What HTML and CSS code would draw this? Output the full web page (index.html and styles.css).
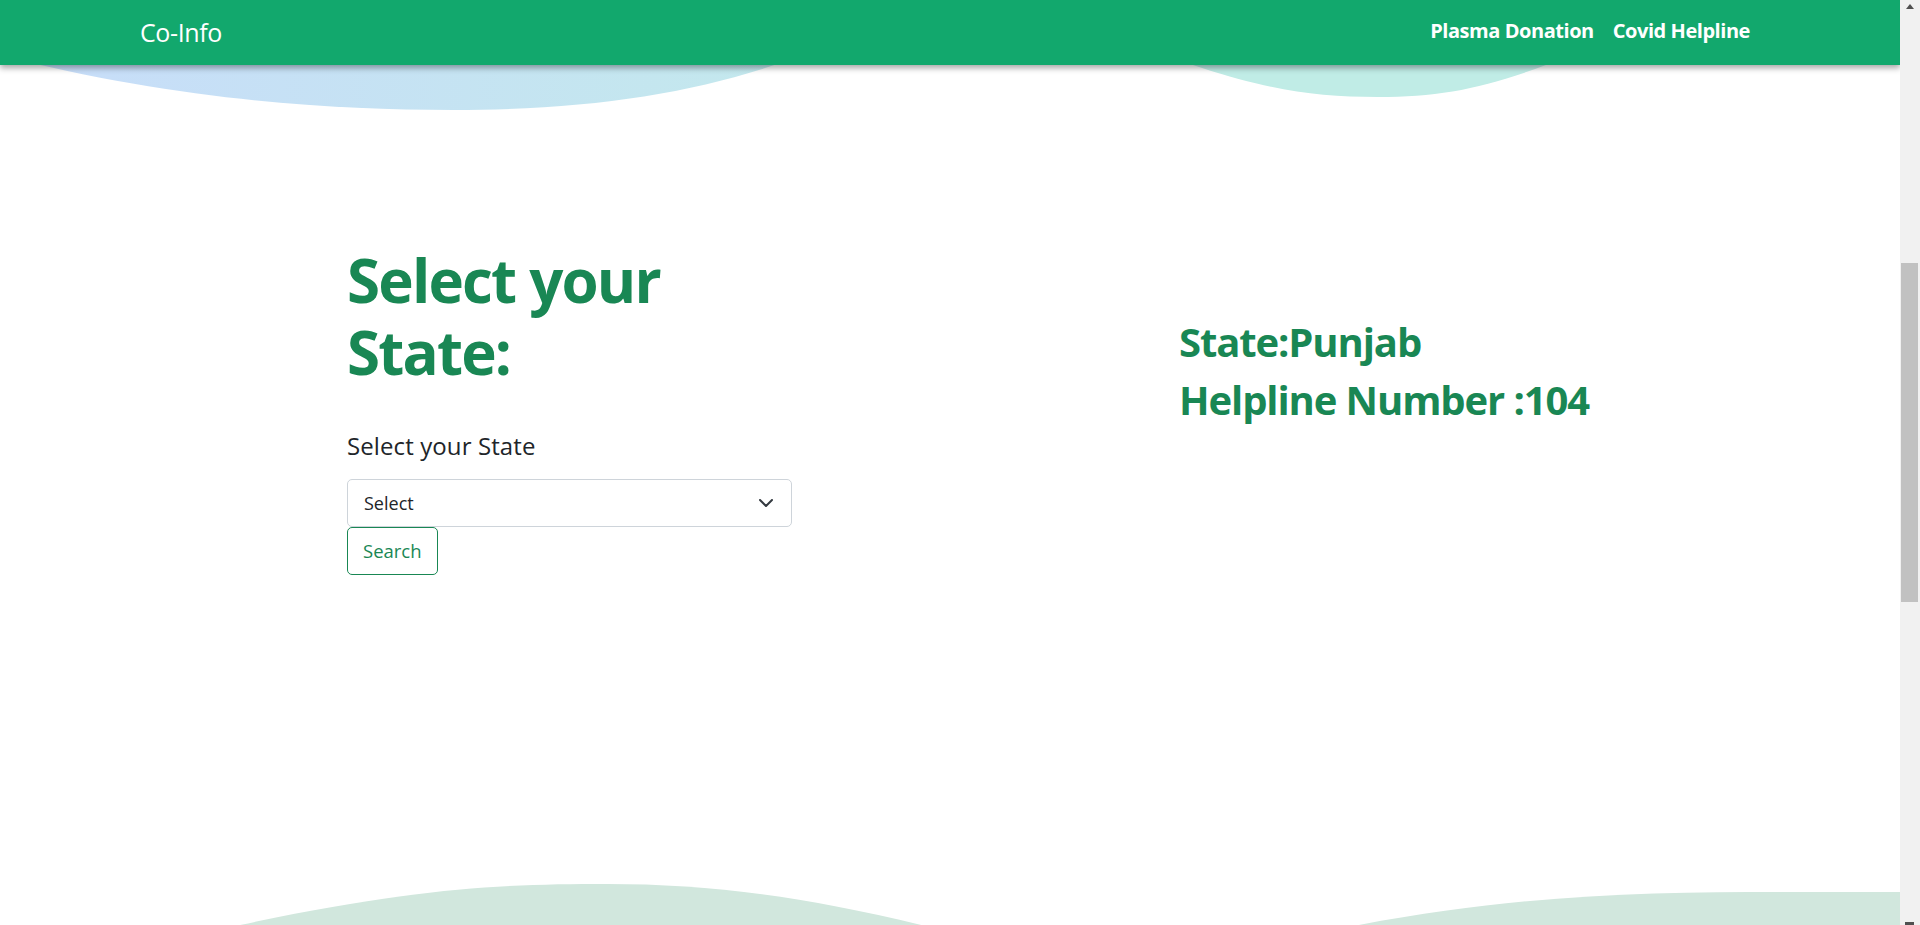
FILE: index.html
```html
<!DOCTYPE html>
<html lang="en">
<head>
<meta charset="utf-8">
<title>Co-Info</title>
<link rel="stylesheet" href="styles.css">
</head>
<body>
<div class="screen">
  <div class="viewport">
    <svg class="waves-top" width="1900" height="130" viewBox="0 0 1900 130" aria-hidden="true">
      <defs>
        <linearGradient id="g1" x1="0" y1="0" x2="1" y2="0">
          <stop offset="0" stop-color="#c8dbfb"/>
          <stop offset="1" stop-color="#c3e9ec"/>
        </linearGradient>
      </defs>
      <path d="M-90,30 C120,95 300,110 453,110 C610,110 730,88 840,40 L840,0 L-90,0 Z" fill="url(#g1)"/>
      <path d="M1110,35 C1240,85 1295,97 1378,97 C1460,97 1510,82 1620,35 L1620,0 L1110,0 Z" fill="#c0ece6"/>
    </svg>
    <nav class="navbar">
      <a class="brand" href="#">Co-Info</a>
      <div class="nav-links">
        <a class="nav-link" href="#">Plasma Donation</a>
        <a class="nav-link" href="#">Covid Helpline</a>
      </div>
    </nav>
    <main class="content">
      <section class="picker">
        <h1 class="title">Select your State:</h1>
        <label class="label">Select your State</label>
        <div class="select">
          <span>Select</span>
          <svg class="chevron" width="14" height="8" viewBox="0 0 14 8" aria-hidden="true"><path d="M1 1l6 6 6-6" fill="none" stroke="#343a40" stroke-width="2" stroke-linecap="round" stroke-linejoin="round"/></svg>
        </div>
        <button class="btn">Search</button>
      </section>
      <section class="result">
        <h2 class="info">State:Punjab</h2>
        <h2 class="info">Helpline Number :104</h2>
      </section>
    </main>
    <svg class="waves-bottom" width="1900" height="60" viewBox="0 865 1900 60" aria-hidden="true">
      <path d="M72,965 C372,888 482,884 607,884 C742,884 862,905 1072,965 Z" fill="#d1e7dd"/>
      <path d="M1190,965 C1440,895 1610,892 1790,892 L1900,892 L1900,965 Z" fill="#d1e7dd"/>
    </svg>
  </div>
  <div class="scrollbar">
    <div class="sb-btn"><span class="arrow-up"></span></div>
    <div class="sb-track"><div class="sb-thumb"></div></div>
    <div class="sb-btn-down"><span class="arrow-down"></span></div>
  </div>
</div>
</body>
</html>
```

FILE: styles.css
```css
* { box-sizing: border-box; }
html, body {
  margin: 0;
  padding: 0;
  height: 925px;
  overflow: hidden;
  background: #fff;
  font-family: "Open Sans", "Noto Sans", sans-serif;
  color: #212529;
}
.screen {
  display: flex;
  width: 1920px;
  height: 925px;
}
.viewport {
  position: relative;
  width: 1900px;
  height: 925px;
  overflow: hidden;
  display: flex;
  flex-direction: column;
}
.waves-top {
  position: absolute;
  top: 0;
  left: 0;
  z-index: 0;
}
.waves-bottom {
  position: absolute;
  left: 0;
  bottom: 0;
  z-index: 0;
}
.navbar {
  position: relative;
  z-index: 3;
  height: 65px;
  flex: 0 0 65px;
  background: #12a86d;
  display: flex;
  align-items: center;
  justify-content: space-between;
  padding: 0 150px 0 140px;
  box-shadow: 0 3px 6px rgba(0, 0, 0, 0.35);
}
.brand {
  color: #fff;
  text-decoration: none;
  font-size: 25px;
  line-height: 1.5;
  font-weight: 400;
  letter-spacing: -0.4px;
}
.nav-links {
  display: flex;
  gap: 19px;
  margin-bottom: 4px;
}
.nav-link {
  color: #fff;
  text-decoration: none;
  font-size: 20px;
  font-weight: 700;
  line-height: 30px;
  letter-spacing: -0.45px;
}
.content {
  position: relative;
  z-index: 1;
  display: flex;
  gap: 387px;
  padding: 179px 0 0 347px;
}
.picker {
  width: 445px;
  display: flex;
  flex-direction: column;
  align-items: flex-start;
}
.title {
  margin: 0 0 40px;
  font-size: 60px;
  line-height: 72px;
  font-weight: 700;
  color: #198754;
  letter-spacing: -1.8px;
}
.label {
  display: block;
  font-size: 24px;
  line-height: 36px;
  margin-bottom: 15px;
  color: #212529;
  letter-spacing: 0.1px;
}
.select {
  width: 445px;
  height: 48px;
  border: 1px solid #ced4da;
  border-radius: 5px;
  background: #fff;
  display: flex;
  align-items: center;
  justify-content: space-between;
  padding: 0 18px 0 16px;
  font-size: 18px;
  color: #212529;
}
.chevron { display: block; }
.btn {
  height: 48px;
  padding: 0 15px;
  border: 1px solid #198754;
  border-radius: 5px;
  background: transparent;
  color: #198754;
  font-family: inherit;
  font-size: 18.5px;
  line-height: 1;
}
.result {
  padding-top: 74px;
}
.info {
  margin: 0 0 10px;
  font-size: 40px;
  line-height: 48px;
  font-weight: 700;
  color: #198754;
  letter-spacing: -1.1px;
}
.scrollbar {
  width: 20px;
  height: 925px;
  background: #f1f1f1;
  display: flex;
  flex-direction: column;
}
.sb-btn {
  height: 17px;
  display: flex;
  justify-content: center;
  padding-top: 4px;
}
.arrow-up {
  width: 0;
  height: 0;
  border-left: 4.5px solid transparent;
  border-right: 4.5px solid transparent;
  border-bottom: 5px solid #505050;
  margin-left: -1px;
}
.sb-track {
  flex: 1;
  padding: 246px 2px 0 1px;
}
.sb-thumb {
  height: 339px;
  background: #c1c1c1;
}
.sb-btn-down {
  height: 3px;
  display: flex;
  justify-content: center;
  overflow: hidden;
}
.arrow-down {
  width: 9px;
  height: 3px;
  background: #505050;
  margin-left: -1px;
}
```
